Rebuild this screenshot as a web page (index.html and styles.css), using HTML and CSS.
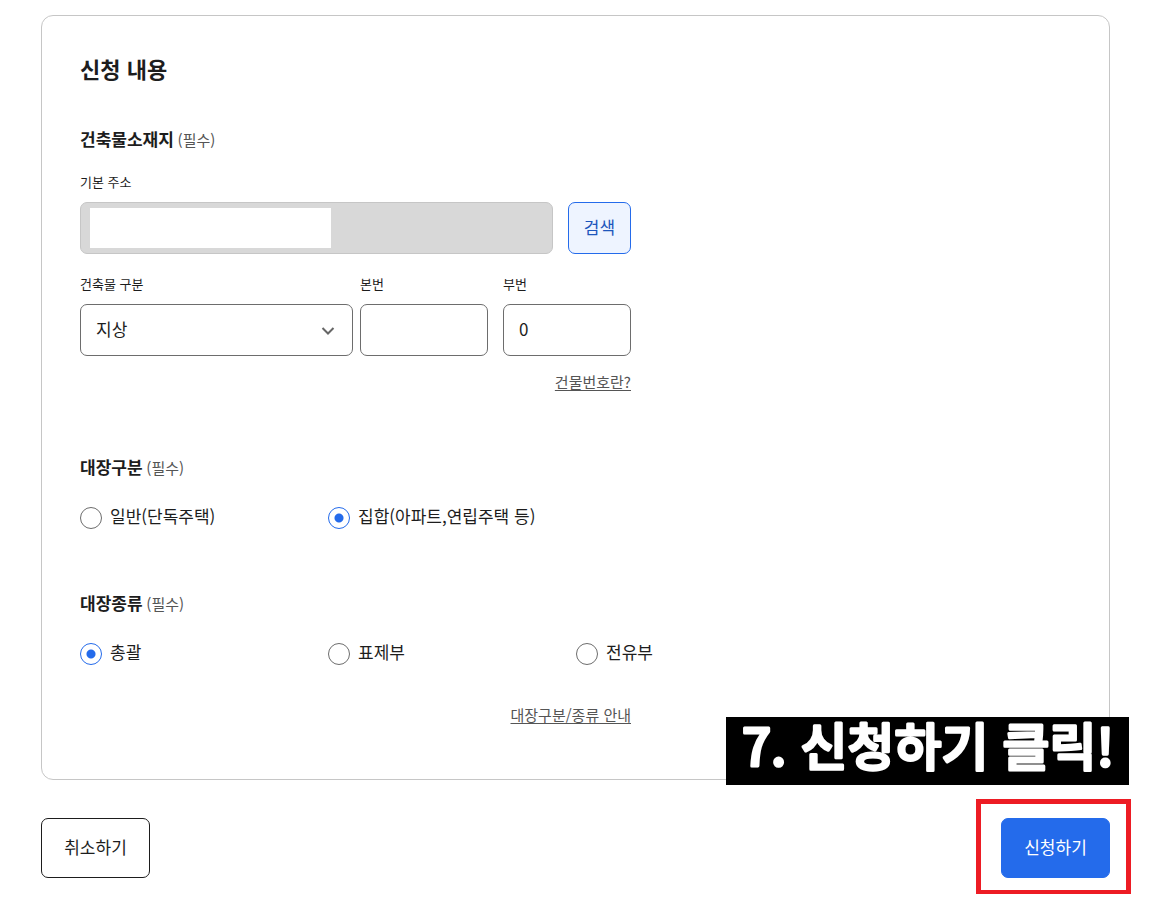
FILE: index.html
```html
<!DOCTYPE html>
<html lang="ko">
<head>
<meta charset="utf-8">
<meta name="viewport" content="width=device-width, initial-scale=1">
<title>신청 내용</title>
<link rel="stylesheet" href="styles.css">
</head>
<body>
<form class="page">
  <section class="card">
    <h2 class="card-title">신청 내용</h2>

    <fieldset class="group">
      <legend class="group-title">건축물소재지 <span class="required">(필수)</span></legend>
      <div class="address">
        <label class="label" for="address">기본 주소</label>
        <div class="search-row">
          <div class="address-field">
            <input class="control control-readonly" id="address" type="text" readonly>
            <span class="mask"></span>
          </div>
          <button class="search-button" type="button">검색</button>
        </div>
        <div class="number-row">
          <div class="field field-kind">
            <label class="label" for="kind">건축물 구분</label>
            <div class="select-wrap">
              <select class="control select" id="kind"><option>지상</option><option>지하</option></select>
              <svg class="chevron" viewBox="0 0 14 10" aria-hidden="true"><path d="M1.500 2 7 7.500 12.500 2"/></svg>
            </div>
          </div>
          <div class="field">
            <label class="label" for="main-number">본번</label>
            <input class="control" id="main-number" type="text">
          </div>
          <div class="field field-sub">
            <label class="label" for="sub-number">부번</label>
            <input class="control" id="sub-number" type="text" value="0">
          </div>
        </div>
        <div class="help"><a class="help-link" href="#number">건물번호란?</a></div>
      </div>
    </fieldset>

    <fieldset class="group">
      <legend class="group-title">대장구분 <span class="required">(필수)</span></legend>
      <div class="options">
        <label class="option"><input class="radio" type="radio" name="division"><span class="option-text">일반(단독주택)</span></label>
        <label class="option"><input class="radio" type="radio" name="division" checked><span class="option-text">집합(아파트,연립주택 등)</span></label>
      </div>
    </fieldset>

    <fieldset class="group group-last">
      <legend class="group-title">대장종류 <span class="required">(필수)</span></legend>
      <div class="options">
        <label class="option"><input class="radio" type="radio" name="type" checked><span class="option-text">총괄</span></label>
        <label class="option"><input class="radio" type="radio" name="type"><span class="option-text">표제부</span></label>
        <label class="option"><input class="radio" type="radio" name="type"><span class="option-text">전유부</span></label>
      </div>
      <div class="help help-type"><a class="help-link" href="#guide">대장구분/종류 안내</a></div>
    </fieldset>

    <svg class="caption" viewBox="0 0 403 68">
      <text class="caption-text" x="202" y="49">7. 신청하기 클릭!</text>
    </svg>
  </section>

  <div class="actions">
    <button class="button" type="button">취소하기</button>
    <div class="highlight"><button class="button button-primary" type="button">신청하기</button></div>
  </div>
</form>
</body>
</html>
```
FILE: styles.css
```css
* { box-sizing: border-box; }

body {
  margin: 0;
  background: #fff;
  color: #1d1d1d;
  font-family: "Noto Sans CJK KR", sans-serif;
  font-size: 17px;
  line-height: 26px;
}

button, input, select { font: inherit; color: inherit; margin: 0; }

.page { padding: 15px 41px 16px; }

.card {
  position: relative;
  padding: 36px 38px 52px;
  border: 1px solid #c6c6c6;
  border-radius: 12px;
}

.card-title {
  margin: 0 0 42px;
  font-size: 22px;
  font-weight: 700;
  line-height: 32px;
}

.group { margin: 0; padding: 0; border: 0; min-width: 0; }
.group + .group { margin-top: 60px; }
.group + .group-last { margin-top: 59px; }
.group-title { padding: 0; font-weight: 700; }
.required { margin-left: -1px; color: #555; font-size: 15px; font-weight: 400; line-height: 1; }

.address { max-width: 551px; padding-top: 20px; }
.label { display: block; margin-bottom: 10px; font-size: 13px; line-height: 20px; }

.search-row { display: flex; gap: 15px; margin-bottom: 20px; }
.address-field { position: relative; flex: 1; }

.control {
  display: block;
  width: 100%;
  height: 52px;
  padding: 0 15px 3px;
  border: 1px solid #6d6d6d;
  border-radius: 7px;
  background: #fff;
}
.control-readonly { border-color: #c6c6c6; background: #d8d8d8; }

.mask {
  position: absolute;
  top: 6px;
  bottom: 6px;
  left: 10px;
  width: 51%;
  background: #fff;
}

.search-button {
  width: 63px;
  height: 52px;
  padding: 0 0 3px;
  border: 1px solid #246beb;
  border-radius: 7px;
  background: #eef4ff;
  color: #1d56bc;
}

.number-row { display: flex; }
.field { flex: 128; min-width: 0; }
.field-kind { flex: 273; margin-right: 7px; }
.field-sub { margin-left: 15px; }

.select-wrap { position: relative; }
.select { appearance: none; }
.chevron {
  position: absolute;
  top: 22px;
  right: 18px;
  width: 14px;
  height: 10px;
  fill: none;
  stroke: #666;
  stroke-width: 2;
  pointer-events: none;
}

.help { display: flex; justify-content: flex-end; max-width: 551px; margin-top: 14px; }
.help-type { margin-top: 36px; }
.help-link { color: #555; font-size: 15px; line-height: 24px; text-underline-offset: 2px; }

.options { display: flex; flex-wrap: wrap; padding-top: 24px; }
.option { display: flex; align-items: center; gap: 8px; width: 248px; height: 27px; white-space: nowrap; }
.option-text { padding-bottom: 3px; }

.radio {
  appearance: none;
  flex: none;
  width: 22px;
  height: 22px;
  border: 1px solid #6d6d6d;
  border-radius: 50%;
  background: #fff;
}
.radio:checked {
  border-color: #246beb;
  background: radial-gradient(circle, #246beb 4px, #fff 5px);
}

.caption {
  position: absolute;
  right: -20px;
  bottom: -6px;
  width: 403px;
  height: 68px;
  overflow: visible;
  background: #000;
}
.caption-text {
  fill: #fff;
  stroke: #fff;
  stroke-width: 3px;
  stroke-linejoin: round;
  font-size: 51px;
  font-weight: 500;
  text-anchor: middle;
}

.actions { display: flex; justify-content: space-between; margin-top: 38px; }

.button {
  display: block;
  min-width: 109px;
  height: 60px;
  padding: 0 22px 3px;
  border: 1px solid #1d1d1d;
  border-radius: 7px;
  background: #fff;
}
.button-primary { border-color: #246beb; background: #246beb; color: #fff; }

.highlight { position: relative; }
.highlight::after {
  content: "";
  position: absolute;
  top: -19px;
  right: -21px;
  bottom: -17px;
  left: -25px;
  border: 5px solid #ed1c24;
  pointer-events: none;
}
```
